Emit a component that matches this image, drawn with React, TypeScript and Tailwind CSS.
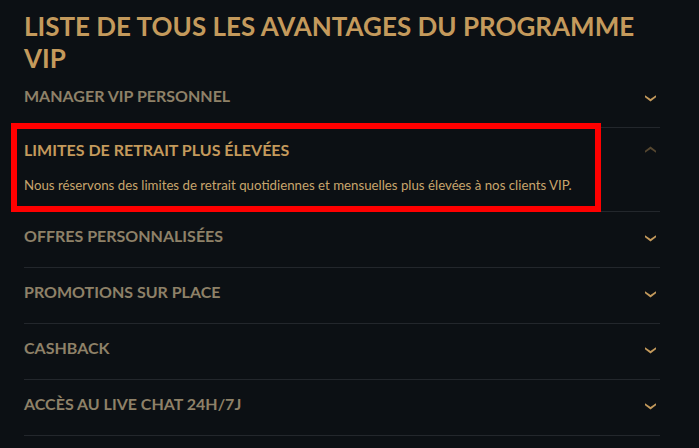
import React from "react";

interface Avantage {
  titre: string;
  texte?: string;
}

const avantages: Avantage[] = [
  { titre: "MANAGER VIP PERSONNEL" },
  {
    titre: "LIMITES DE RETRAIT PLUS ÉLEVÉES",
    texte:
      "Nous réservons des limites de retrait quotidiennes et mensuelles plus élevées à nos clients VIP.",
  },
  { titre: "OFFRES PERSONNALISÉES" },
  { titre: "PROMOTIONS SUR PLACE" },
  { titre: "CASHBACK" },
  { titre: "ACCÈS AU LIVE CHAT 24H/7J" },
];

function Chevron({ ouvert }: { ouvert: boolean }) {
  return (
    <svg
      width="11"
      height="8"
      viewBox="0 0 11 8"
      className={ouvert ? "rotate-180 opacity-40" : "mt-[4px]"}
    >
      <path d="M0 1.2 L5.5 5 L11 1.2 L11 3.2 L5.5 7.6 L0 3.2 Z" fill="#c49a5c" />
    </svg>
  );
}

export default function App() {
  const ouvert = 1;

  return (
    <div className="relative w-[699px] h-[448px] overflow-hidden bg-[#0c1014] font-['Lato',sans-serif]">
      <div className="pl-6 pr-[39px] pt-[10px]">
        <h1 className="max-w-[640px] text-[26px] leading-[32px] font-bold text-[#c49a5c]">
          LISTE DE TOUS LES AVANTAGES DU PROGRAMME VIP
        </h1>

        <div className="-mt-[2px]">
          {avantages.map((a, i) => {
            const estOuvert = i === ouvert;
            return (
              <div
                key={a.titre}
                className={`border-b border-[#23272c] ${estOuvert ? "h-[84px]" : "h-[56px]"}`}
              >
                <div
                  className={`flex items-center justify-between pr-[4px] ${estOuvert ? "h-[44px]" : "h-[48px]"}`}
                >
                  <span
                    className={`text-[16px] font-bold ${estOuvert ? "text-[#c49a5c]" : "text-[#8e8168]"}`}
                  >
                    {a.titre}
                  </span>
                  <Chevron ouvert={estOuvert} />
                </div>
                {estOuvert && a.texte && (
                  <p className="mt-[4px] text-[13.25px] leading-[18px] text-[#c8a56c]">
                    {a.texte}
                  </p>
                )}
              </div>
            );
          })}
        </div>
      </div>

      {/* cadre rouge d'annotation */}
      <div className="absolute left-[11px] top-[123px] w-[590px] h-[89px] border-[6px] border-[#ff0000]" />
    </div>
  );
}
